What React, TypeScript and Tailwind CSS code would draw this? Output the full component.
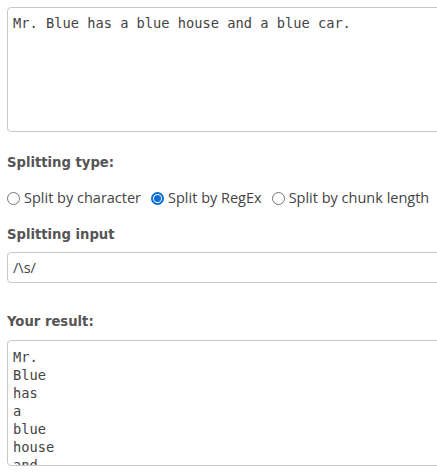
import { useState } from "react";

const MODES = [
  { key: "char", label: "Split by character" },
  { key: "regex", label: "Split by RegEx" },
  { key: "chunk", label: "Split by chunk length" },
];

const SOURCE = "Mr. Blue has a blue house and a blue car.";

function Radio({ checked }: { checked: boolean }) {
  return checked ? (
    <span className="flex h-[13px] w-[13px] items-center justify-center rounded-full border-2 border-[#0a6cd6] bg-white">
      <span className="h-[7px] w-[7px] rounded-full bg-[#0a6cd6]" />
    </span>
  ) : (
    <span className="h-[13px] w-[13px] rounded-full border border-[#767676] bg-white" />
  );
}

export default function App() {
  const [mode, setMode] = useState("regex");
  const result = SOURCE.split(/\s/).join("\n");

  return (
    <div className="h-[472px] w-[437px] overflow-hidden bg-white pl-[7px] pt-[7px] font-['Open_Sans',sans-serif] text-[#444]">
      <textarea
        readOnly
        value={SOURCE}
        className="block h-[125px] w-[460px] resize-none rounded-[4px] border border-[#c8c8c8] px-[5px] py-[6px] font-['DejaVu_Sans_Mono',monospace] text-[13.7px] leading-[18px] text-[#444] outline-none"
      />

      <h3 className="mt-[21px] font-['DejaVu_Sans',sans-serif] text-[13.2px] leading-[20px] font-bold text-[#555]">Splitting type:</h3>

      <div className="mt-[15px] flex items-center gap-[10px] text-[14.5px] leading-[20px]">
        {MODES.map((m) => (
          <label key={m.key} className="flex items-center gap-[4px]" onClick={() => setMode(m.key)}>
            <Radio checked={mode === m.key} />
            <span>{m.label}</span>
          </label>
        ))}
      </div>

      <h3 className="mt-[17px] font-['DejaVu_Sans',sans-serif] text-[13.2px] leading-[20px] font-bold text-[#555]">Splitting input</h3>

      <input
        readOnly
        value="/\s/"
        className="mt-[7px] block h-[31px] w-[460px] rounded-[4px] border border-[#c8c8c8] px-[5px] text-[14.5px] text-[#444] outline-none"
      />

      <h3 className="mt-[29px] font-['DejaVu_Sans',sans-serif] text-[13.2px] leading-[20px] font-bold text-[#555]">Your result:</h3>

      <textarea
        readOnly
        value={result}
        className="mt-[8px] block h-[126px] w-[460px] resize-none overflow-hidden rounded-[4px] border border-[#c8c8c8] px-[5px] pt-[7px] pb-[4px] font-['DejaVu_Sans_Mono',monospace] text-[13.7px] leading-[18px] text-[#444] outline-none"
      />
    </div>
  );
}
